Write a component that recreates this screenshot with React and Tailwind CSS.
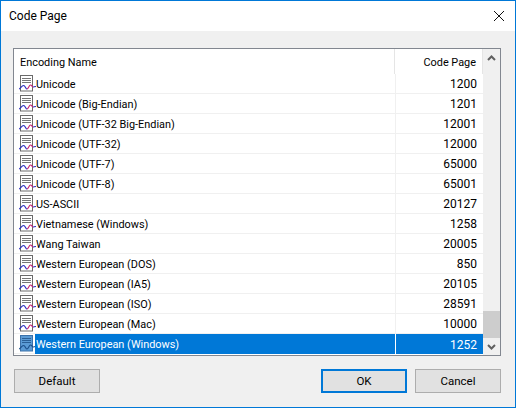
const rows = [
  ["Unicode", "1200"],
  ["Unicode (Big-Endian)", "1201"],
  ["Unicode (UTF-32 Big-Endian)", "12001"],
  ["Unicode (UTF-32)", "12000"],
  ["Unicode (UTF-7)", "65000"],
  ["Unicode (UTF-8)", "65001"],
  ["US-ASCII", "20127"],
  ["Vietnamese (Windows)", "1258"],
  ["Wang Taiwan", "20005"],
  ["Western European (DOS)", "850"],
  ["Western European (IA5)", "20105"],
  ["Western European (ISO)", "28591"],
  ["Western European (Mac)", "10000"],
  ["Western European (Windows)", "1252"],
];

function DocIcon({ selected }) {
  return (
    <svg width="17" height="18" viewBox="0 0 17 18" className="shrink-0">
      <rect x="1.500" y="0.500" width="12" height="15.500" fill={selected ? "#5b9bd5" : "#ffffff"} stroke={selected ? "#3a70a8" : "#6a6a6a"} />
      <path d="M3 3.500h9M3 5.500h9M3 7.500h9" stroke={selected ? "#2a5f96" : "#777777"} fill="none" />
      <path d="M0 14c1.500 0 2.500-3.500 4.500-3.500S6.500 14 8 14" stroke={selected ? "#1b4f8a" : "#2c2cc0"} strokeWidth="1.100" fill="none" />
      <path d="M8 14c1.500 0 2-4 3.500-4 1.500 0 1.500 2 2.500 2" stroke={selected ? "#1b4f8a" : "#c8206e"} strokeWidth="1.100" fill="none" />
      <path d="M14 12c1 0 1.500-.5 3-.5" stroke={selected ? "#1b4f8a" : "#2c2cc0"} strokeWidth="1.100" fill="none" />
    </svg>
  );
}

export default function App() {
  return (
    <div className="w-[516px] h-[408px] bg-[#f0f0f0] border border-[#0078d7] flex flex-col text-[10.9px] text-black font-['Roboto',sans-serif] overflow-hidden">
      <div className="h-[30px] shrink-0 bg-white flex items-center justify-between pl-[8px] pr-[5px]">
        <span className="text-[12px]">Code Page</span>
        <svg width="12" height="12" viewBox="0 0 12 12" className="mr-[5px]">
          <path d="M1 1l10 10M11 1L1 11" stroke="#111" strokeWidth="1" fill="none" />
        </svg>
      </div>
      <div className="flex-1 flex flex-col pt-[17px] px-[12px] pb-[13px]">
        <div className="h-[308px] w-[488px] border border-[#828790] bg-white flex">
          <div className="flex-1 flex flex-col min-w-0">
            <div className="h-[25px] flex items-center shrink-0">
              <div className="w-[381px] h-full pl-[6px] pt-[4px] flex items-center border-r border-[#e5e5e5]">Encoding Name</div>
              <div className="flex-1 h-full pr-[6px] pt-[4px] flex items-center justify-end border-r border-[#e5e5e5]">Code Page</div>
            </div>
            {rows.map(([name, code], i) => {
              const sel = i === rows.length - 1;
              return (
                <div key={name} className="h-[20px] flex items-stretch shrink-0">
                  <div className="w-[21px] shrink-0 flex items-center pl-[5px] border-b border-[#f0f0f0]">
                    <DocIcon selected={sel} />
                  </div>
                  <div className={sel ? "w-[361px] flex items-center pl-[1px] pt-[3px] bg-[#0078d7] text-white border-r border-white" : "w-[361px] flex items-center pl-[1px] pt-[3px] border-r border-b border-[#f0f0f0]"}>
                    {name}
                  </div>
                  <div className={sel ? "flex-1 flex items-center justify-end pr-[6px] pt-px text-[12px] bg-[#0078d7] text-white" : "flex-1 flex items-center justify-end pr-[6px] pt-px text-[12px] border-b border-[#f0f0f0]"}>
                    {code}
                  </div>
                </div>
              );
            })}
          </div>
          <div className="w-[17px] shrink-0 bg-[#f0f0f0] flex flex-col">
            <div className="h-[17px] flex items-center justify-center">
              <svg width="9" height="6" viewBox="0 0 9 6"><path d="M1 5l3.500-3.500L8 5" stroke="#606060" strokeWidth="2" fill="none" /></svg>
            </div>
            <div className="flex-1 flex flex-col justify-end">
              <div className="h-[27px] bg-[#cdcdcd]" />
            </div>
            <div className="h-[17px] flex items-center justify-center">
              <svg width="9" height="6" viewBox="0 0 9 6"><path d="M1 1l3.500 3.500L8 1" stroke="#606060" strokeWidth="2" fill="none" /></svg>
            </div>
          </div>
        </div>
        <div className="mt-[13px] flex h-[24px] pl-px pr-[2px] text-[11.5px]">
          <button className="w-[86px] h-full pt-px bg-[#e1e1e1] border border-[#adadad]">Default</button>
          <button className="ml-auto w-[86px] h-full pt-px bg-[#e1e1e1] border-2 border-[#0078d7]">OK</button>
          <button className="ml-[8px] w-[86px] h-full pt-px bg-[#e1e1e1] border border-[#adadad]">Cancel</button>
        </div>
      </div>
    </div>
  );
}
